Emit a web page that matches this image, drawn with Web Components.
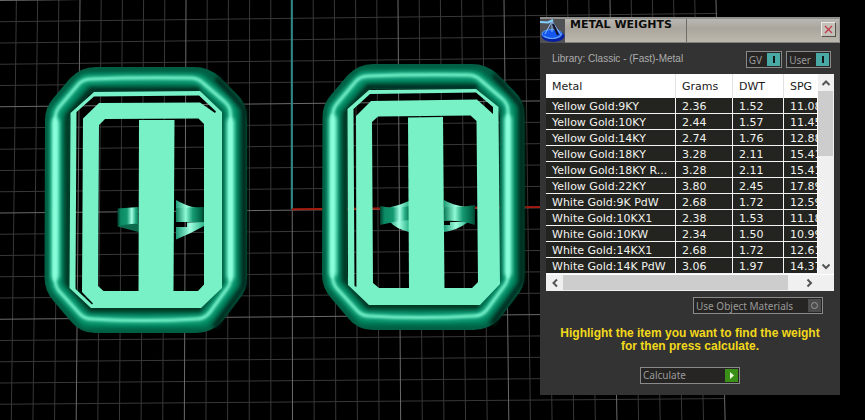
<!DOCTYPE html>
<html lang="en">
<head>
<meta charset="utf-8">
<title>Metal Weights</title>
<style>
  html, body { margin: 0; min-height: 100%; background: #000; }
  body { font-family: "DejaVu Sans", sans-serif; font-size: 11px; }
</style>
</head>
<body>
<cad-workspace>
  <cad-scene slot="scene"></cad-scene>
  <tool-window heading="METAL WEIGHTS">
    <library-bar slot="top" name="Library: Classic - (Fast)-Metal">
      <option-toggle label="GV" checked></option-toggle>
      <option-toggle label="User" checked></option-toggle>
    </library-bar>
    <metal-table></metal-table>
    <option-toggle class="materials" label="Use Object Materials" wide></option-toggle>
    <hint-text>Highlight the item you want to find the weight for then press calculate.</hint-text>
    <action-button>Calculate</action-button>
  </tool-window>
</cad-workspace>

<script>
const mount = (host, html) => {
  const t = document.createElement('template');
  t.innerHTML = html;
  host.attachShadow({ mode: 'open' }).append(t.content.cloneNode(true));
};

customElements.define('cad-workspace', class extends HTMLElement {
  constructor() {
    super();
    mount(this, `<style>
      :host { display: block; position: relative; min-height: 100vh; overflow: hidden; background: #000; }
      ::slotted(tool-window) { position: absolute; top: 17px; right: 25px; }
      ::slotted(cad-scene) { position: absolute; inset: 0; }
    </style><slot name="scene"></slot><slot></slot>`);
  }
});

/* Perspective grid, axes and the two octagonal settings. */
customElements.define('cad-scene', class extends HTMLElement {
  constructor() {
    super();
    const line = (x1, y1, x2, y2, c, w = 1) =>
      `<line x1="${x1}" y1="${y1}" x2="${x2}" y2="${y2}" stroke="${c}" stroke-width="${w}"/>`;
    let grid = '';
    for (let k = -14; k <= 20; k++)
      if (k % 5) grid += line(292 + 21.2 * k, 0, 292.5 + 21.63 * k, 420, '#383838');
    for (let i = 0; i <= 19; i++)
      if (i % 5) grid += line(0, 0.5 + 21.25 * i, 717 + i * 0.4, -8 + 21.4 * i, '#383838');
    for (let k = -10; k <= 20; k += 5)
      grid += line(292 + 21.2 * k, 0, 292.5 + 21.63 * k, 420, '#6a6a6a');
    for (let i = 0; i <= 19; i += 5)
      grid += line(0, 0.5 + 21.25 * i, 717 + i * 0.4, -8 + 21.4 * i, '#6a6a6a');
    const axes = line(291.8, 0, 291.8, 209, '#2e8686', 2) + line(292, 209.3, 545, 207, '#a31c10', 2);

    const ridge = 'M55.500 118Q55 112 60 106L77 86Q82 79 91 79Q140 77 190 78Q198 78 203 83L225 102Q230.500 107 230.500 114V278Q230.500 285 226 290L210 312Q205 319 196 319Q143 322 92 319Q84 319 79 313L59 291Q55 286 55 278Z';
    const tube = (dx, dy) => `<g transform="translate(${dx} ${dy})" fill="none" stroke-linejoin="round">
      <path d="M57.500 120Q57.500 112 63 106L79 87Q86 79.500 96 79.500H194Q204 79.500 211 86L228 103Q234.500 109 234.500 120V277Q234.500 286 229 292L213 313Q206 320.500 196 320.500H95Q86 320.500 80 313L63 293Q57 286 57 277Z" stroke="#005f44" stroke-width="25"/>
      <g filter="url(#soft2)">
        <path d="M57 120 57 112 86 80H200L232 109V286L204 321H86L56 286V120" stroke="#00855f" stroke-width="13"/>
        <path d="M67.500 116 91 89H201" stroke="#00281a" stroke-width="6"/>
        <path d="M67.500 115V284L91 309H202" stroke="#003524" stroke-width="6"/>
        <path d="M216 78 244 110V284L214 327" stroke="#00281a" stroke-width="6"/>
      </g>
      <path d="${ridge}" stroke="#22b088" stroke-width="7" filter="url(#soft2)"/>
      <path d="${ridge}" stroke="#74f0c8" stroke-width="3" filter="url(#soft1)"/>
      <path d="M55.500 122V276M230.500 122V276" stroke="#86ffda" stroke-width="7" stroke-linecap="round" filter="url(#soft2)"/>
      <path d="M54.500 118V280M230.500 118V280" stroke="#90ffde" stroke-width="2" stroke-linecap="round" filter="url(#soft1)"/>
    </g>`;

    mount(this, `<style>
      :host { display: block; }
      svg { display: block; width: 100%; height: 100%; }
    </style>
    <svg viewBox="0 0 865 420" preserveAspectRatio="xMinYMin slice" role="img" aria-label="CAD viewport with two ring settings">
      <defs>
        <filter id="soft1" x="-20%" y="-20%" width="140%" height="140%"><feGaussianBlur stdDeviation="1"/></filter>
        <filter id="soft2" x="-20%" y="-20%" width="140%" height="140%"><feGaussianBlur stdDeviation="2"/></filter>
        <linearGradient id="bandA"><stop offset="0" stop-color="#003d2b"/><stop offset=".15" stop-color="#0c8963"/><stop offset=".45" stop-color="#12986f"/><stop offset=".68" stop-color="#a5ffe4"/><stop offset=".85" stop-color="#29b186"/><stop offset="1" stop-color="#0a7654"/></linearGradient>
        <linearGradient id="bandB"><stop offset="0" stop-color="#0b7d59"/><stop offset=".35" stop-color="#8ffbd6"/><stop offset=".6" stop-color="#169a72"/><stop offset=".9" stop-color="#006445"/><stop offset="1" stop-color="#00402c"/></linearGradient>
        <linearGradient id="bandC"><stop offset="0" stop-color="#1b9c75"/><stop offset=".5" stop-color="#a0ffe0"/><stop offset="1" stop-color="#2cb48a"/></linearGradient>
      </defs>
      ${grid}${axes}
      ${tube(0, 0)}
      <path d="M117.500 208.500 138.500 207V231.500L128 227 117.500 226.500Z" fill="url(#bandA)"/>
      <path d="M117.500 226.500Q131 223 138.500 224V232Z" fill="#0b6b4c"/>
      <path d="M176 200Q184 205 197 208L176 209Z" fill="url(#bandC)"/>
      <path d="M176 208 204 207V222H176Z" fill="url(#bandB)"/>
      <path d="M187 222.500 204 222V226Q190 234 176 239.500V227H187Z" fill="url(#bandC)"/>
      <g fill="#78f1c7" fill-rule="evenodd">
        <path d="M70.500 113 94 92 200 91 222 112V288L201 308H91L69.500 288Z
          M76.500 112 94 96.500 199 95.500 216 111.500 215 113 200 102.500 99 103 83 118.500 82 292 93 303.500 92 304.500 75.500 289Z
          M105 119 99 125 98 286 103.500 291H198L204 284.500V124L198.500 118.500Z"/>
        <path d="M139 120H174.500L173.500 292H138.500Z"/>
      </g>
      ${tube(277.5, -3)}
      <path d="M391 207Q400 205 409 201V232Q396 229 389 221Z" fill="url(#bandC)"/>
      <path d="M380 206Q395 209 409 206V220Q395 221 380 225Z" fill="url(#bandA)"/>
      <path d="M444 200Q452 205 466 207L444 209ZM450 222 468 222Q458 230 444 232V225H450Z" fill="url(#bandC)"/>
      <path d="M444 207Q458 208 475 205V225Q459 220 444 221Z" fill="url(#bandB)"/>
      <g fill="#78f1c7" fill-rule="evenodd">
        <path d="M347.500 109 369 90 476 89 498.500 107 500 284 480 305H369L348 285Z
          M353.500 109 370 94 476 92.500 493 107V114L477 99.500 371 101 356 116 356.500 287 354.500 286Z
          M378 116.500 372 122 373 283 379 288H472L478 282 476.500 121 470.500 115.500Z"/>
        <path d="M408 117.500 443 117 444.500 289H409Z"/>
      </g>
    </svg>`);
  }
});

customElements.define('tool-window', class extends HTMLElement {
  constructor() {
    super();
    mount(this, `<style>
      :host { display: block; width: 300px; background: #333; color: #bbb; }
      header { display: flex; height: 26px; box-sizing: border-box; background: linear-gradient(#b9b7b3, #aaa69d 40%, #bcb8ae); border-top: 2px solid #8f8f8c; border-bottom: 1px solid #83817c; border-right: 1px solid #999; color: #0c0c0c; }
      header svg { width: 25px; height: 24px; }
      h1 { margin: 0; padding: 0 14px 0 5px; font: bold 11px/11px "DejaVu Sans", sans-serif; border-right: 1px solid #6f6d68; }
      button { width: 15px; height: 15px; margin: 3px 3px 0 auto; padding: 2px; box-sizing: border-box; background: #c3c0b7; border: 1px solid; border-color: #eceae4 #55534f #55534f #eceae4; }
      button svg { display: block; width: 9px; height: 9px; }
      main { display: flex; flex-direction: column; padding: 8px 6px 11px; }
      ::slotted(.materials) { align-self: flex-end; margin: 6px 11px 0 0; }
      ::slotted(hint-text) { margin-top: 13px; }
      ::slotted(action-button) { align-self: center; margin-top: 14px; }
    </style>
    <header>
      <svg viewBox="0 0 25 24" aria-hidden="true">
        <rect width="25" height="24" fill="#505256"/>
        <ellipse cx="13" cy="17" rx="11.500" ry="6" fill="#0a1f9e"/>
        <ellipse cx="12" cy="15" rx="10" ry="4.500" fill="#1557ee" stroke="#4b9bff"/>
        <path d="M12 2 5 15M12 2 21 16M12 2V13" stroke="#8fbcff" fill="none"/>
        <path d="M13 5 18 16" stroke="#10142c" stroke-width="2"/>
        <path d="M0 3 8 3.500 13 1" stroke="#83d0ff" stroke-width="2" fill="none"/>
        <path d="M4 17Q12 22 20 17" stroke="#62a6ff" fill="none"/>
      </svg>
      <h1></h1>
      <button aria-label="Close"><svg viewBox="0 0 9 9"><path d="M1 1 8 8M8 1 1 8" stroke="#c2384a" stroke-width="1.200"/></svg></button>
    </header>
    <main><slot name="top"></slot><slot></slot></main>`);
    this.shadowRoot.querySelector('h1').textContent = this.getAttribute('heading');
  }
});

customElements.define('library-bar', class extends HTMLElement {
  constructor() {
    super();
    mount(this, `<style>
      :host { display: flex; gap: 4px; padding: 0 3px 6px 6px; }
      span { flex: 1; font: 10px/16px "Liberation Sans", Arial, sans-serif; color: #adadad; white-space: nowrap; }
    </style><span></span><slot></slot>`);
    this.shadowRoot.querySelector('span').textContent = this.getAttribute('name');
  }
});

customElements.define('option-toggle', class extends HTMLElement {
  constructor() {
    super();
    mount(this, `<style>
      :host { display: block; }
      label { display: flex; justify-content: space-between; gap: 5px; height: 17px; box-sizing: border-box; border: 1px solid #8a8a8a; background: #262523; padding: 1px 1px 1px 2px; font: 10px/15px "Noto Sans", sans-serif; color: #999; white-space: nowrap; }
      :host([wide]) label { width: 130px; }
      input { appearance: none; margin: 0; width: 13px; height: 13px; background: #4d4d4d; display: grid; place-items: center; }
      input::before { content: ""; width: 5px; height: 5px; border: 1px solid #999; border-radius: 50%; }
      input:checked { background: #48a9a5; }
      input:checked::before { width: 2px; height: 7px; border: 0; border-radius: 0; background: #101818; }
    </style><label><span></span><input type="checkbox"></label>`);
    this.shadowRoot.querySelector('span').textContent = this.getAttribute('label');
    this.shadowRoot.querySelector('input').checked = this.hasAttribute('checked');
  }
});

customElements.define('metal-table', class extends HTMLElement {
  constructor() {
    super();
    const rows = [
      ['Yellow Gold:9KY', '2.36', '1.52', '11.08'],
      ['Yellow Gold:10KY', '2.44', '1.57', '11.45'],
      ['Yellow Gold:14KY', '2.74', '1.76', '12.88'],
      ['Yellow Gold:18KY', '3.28', '2.11', '15.41'],
      ['Yellow Gold:18KY R...', '3.28', '2.11', '15.41'],
      ['Yellow Gold:22KY', '3.80', '2.45', '17.89'],
      ['White Gold:9K PdW', '2.68', '1.72', '12.59'],
      ['White Gold:10KX1', '2.38', '1.53', '11.18'],
      ['White Gold:10KW', '2.34', '1.50', '10.99'],
      ['White Gold:14KX1', '2.68', '1.72', '12.61'],
      ['White Gold:14K PdW', '3.06', '1.97', '14.37']
    ];
    const chevron = (label, d) =>
      `<button aria-label="${label}"><svg viewBox="0 0 10 10"><path d="${d}" fill="none" stroke="#555" stroke-width="2"/></svg></button>`;
    mount(this, `<style>
      :host { display: grid; grid-template-columns: minmax(0, 1fr) 17px; background: #fff; }
      .view { overflow: hidden; }
      table { width: 324px; table-layout: fixed; border-collapse: separate; border-spacing: 0; font: 11px/13px "DejaVu Sans", sans-serif; color: #f2f2ee; }
      th, td { padding: 0 0 0 6px; text-align: left; font-weight: normal; white-space: nowrap; box-sizing: border-box; }
      th { height: 24px; background: #fff; color: #1a1a1a; border-right: 1px solid #e2e2e2; }
      td { height: 16px; padding-top: 2px; background: #232320; border-right: 1px solid #f4f4f4; border-bottom: 1px solid #f4f4f4; }
      .v { display: flex; flex-direction: column; background: #f0f0f0; padding-right: 1px; border-left: 1px solid #fff; box-sizing: border-box; }
      .h { display: flex; grid-column: 1 / 3; background: #f0f0f0; border-top: 1px solid #fff; padding: 0 17px 1px 0; }
      button { border: 0; padding: 0; background: #f0f0f0; display: grid; place-items: center; width: 17px; height: 15px; }
      .v button { width: 15px; height: 17px; }
      svg { width: 10px; height: 10px; }
      .track { flex: 1; display: flex; flex-direction: inherit; }
      .v .thumb { flex: 0 0 39%; background: #cdcdcd; }
      .h .thumb { flex: 0 0 95%; background: #cdcdcd; }
      .v .thumb { width: 15px; }
    </style>
    <div class="view"><table>
      <colgroup><col style="width:130px"><col style="width:57px"><col style="width:51px"><col></colgroup>
      <thead><tr><th>Metal</th><th>Grams</th><th>DWT</th><th>SPG</th></tr></thead>
      <tbody>${rows.map(r => `<tr>${r.map(c => `<td>${c}</td>`).join('')}</tr>`).join('')}</tbody>
    </table></div>
    <div class="v">${chevron('Scroll up', 'M1.500 7 5 3.500 8.500 7')}<div class="track"><div class="thumb"></div></div>${chevron('Scroll down', 'M1.500 3.500 5 7 8.500 3.500')}</div>
    <div class="h">${chevron('Scroll left', 'M7 1.500 3.500 5 7 8.500')}<div class="track"><div class="thumb"></div></div>${chevron('Scroll right', 'M3.500 1.500 7 5 3.500 8.500')}</div>`);
  }
});

customElements.define('hint-text', class extends HTMLElement {
  constructor() {
    super();
    mount(this, `<style>
      :host { display: block; padding: 0 14px; text-align: center; font: bold 12px/13px "Liberation Sans", Arial, sans-serif; color: #f2d91c; }
    </style><slot></slot>`);
  }
});

customElements.define('action-button', class extends HTMLElement {
  constructor() {
    super();
    mount(this, `<style>
      :host { display: block; }
      button { display: flex; justify-content: space-between; width: 100px; height: 17px; box-sizing: border-box; border: 1px solid #8a8a8a; background: #262523; padding: 1px 1px 1px 2px; font: 10px/13px "Noto Sans", sans-serif; color: #999; }
      svg { width: 13px; height: 13px; background: #3a8f17; }
    </style><button><slot></slot><svg viewBox="0 0 13 13" aria-hidden="true"><path d="M5 3V10L9 6.500Z" fill="#eaffdc"/></svg></button>`);
  }
});
</script>
</body>
</html>
